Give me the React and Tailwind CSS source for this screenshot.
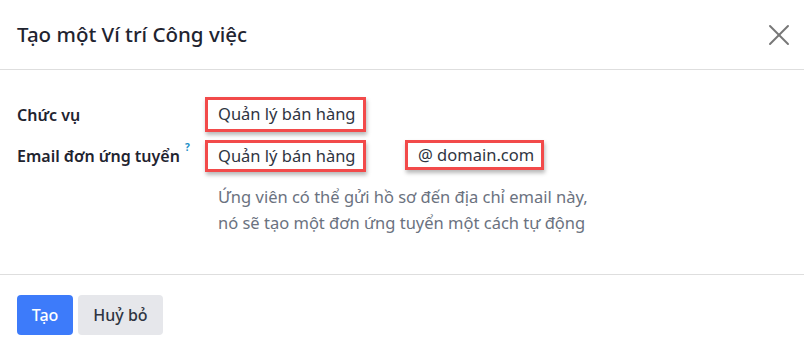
import { X } from 'lucide-react';

function Field({ children, className = '' }) {
  return (
    <div
      className={`flex items-center border-[3px] border-[#f24a4a] pl-[10px] text-[16.5px] text-[#2f3542] shadow-[1px_3px_4px_rgba(0,0,0,0.28)] ${className}`}
    >
      {children}
    </div>
  );
}

export default function App() {
  return (
    <div className="h-[351px] w-[804px] bg-white font-['Noto_Sans','Open_Sans',sans-serif] text-[#1f2430]">
      <header className="flex h-[70px] items-center justify-between border-b border-[#dedede] pl-[17px] pr-[7px]">
        <h1 className="text-[20.5px] font-medium leading-none">Tạo một Ví trí Công việc</h1>
        <X className="h-[36px] w-[36px] text-[#777]" strokeWidth={1.3} />
      </header>

      <div className="h-[205px] border-b border-[#dedede] pl-[17px] pt-[27px]">
        <div className="flex items-center">
          <div className="w-[188px] text-[16px] font-semibold">Chức vụ</div>
          <Field className="h-[35px] w-[161px]">Quản lý bán hàng</Field>
        </div>

        <div className="mt-[8px] flex items-start">
          <div className="flex h-[32px] w-[188px] items-center text-[16px] font-semibold">
            Email đơn ứng tuyển
            <sup className="ml-[5px] -mt-[8px] text-[10px] font-bold text-[#1a8fc7]">?</sup>
          </div>
          <div>
            <div className="flex items-start">
              <Field className="h-[32px] w-[161px]">Quản lý bán hàng</Field>
              <Field className="ml-[39px] h-[30px] w-[139px]">@ domain.com</Field>
            </div>
            <p className="mt-[12px] pl-[13px] text-[16.5px] leading-[26px] text-[#6b7280]">
              Ứng viên có thể gửi hồ sơ đến địa chỉ email này,
              <br />
              nó sẽ tạo một đơn ứng tuyển một cách tự động
            </p>
          </div>
        </div>
      </div>

      <footer className="flex gap-[5px] pl-[17px] pt-[20px]">
        <button className="h-[40px] w-[56px] rounded-[4px] bg-[#3d7bfa] text-[16px] font-medium text-white">
          Tạo
        </button>
        <button className="h-[40px] w-[85px] rounded-[4px] bg-[#e6e7eb] text-[16px] font-medium text-[#2f3542]">
          Huỷ bỏ
        </button>
      </footer>
    </div>
  );
}
